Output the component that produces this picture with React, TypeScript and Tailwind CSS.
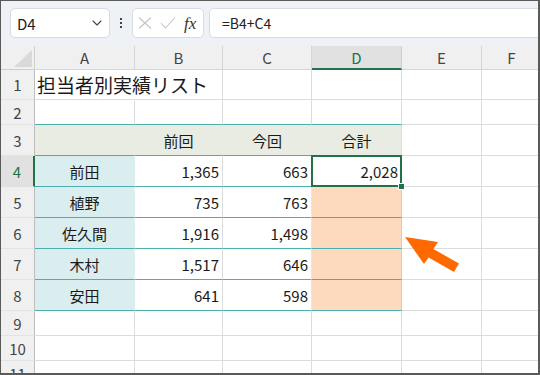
import React from "react";
import { ChevronDown } from "lucide-react";

type Cell = {
  text?: string;
  align?: "left" | "center" | "right";
  bg: string;
  br: string;
  bb: string;
  big?: boolean;
  sel?: boolean;
};

const colW = ["w-[100px]", "w-[88px]", "w-[89px]", "w-[90px]", "w-[80px]", "w-[60px]"];
const letters = ["A", "B", "C", "D", "E", "F"];

const G = "border-r-[#dcdcdc]";
const GB = "border-b-[#dcdcdc]";
const TB = "border-b-[#4aafae]";

function plain(): Cell {
  return { bg: "bg-white", br: G, bb: GB };
}

const names = ["前田", "植野", "佐久間", "木村", "安田"];
const prev = ["1,365", "735", "1,916", "1,517", "641"];
const cur = ["663", "763", "1,498", "646", "598"];

type Row = { n: number; h: string; cells: Cell[] };

const rows: Row[] = [];

rows.push({
  n: 1,
  h: "h-[30px]",
  cells: [
    { text: "担当者別実績リスト", align: "left", bg: "bg-white", br: "border-r-white", bb: GB, big: true },
    plain(),
    plain(),
    plain(),
    plain(),
    plain(),
  ],
});
rows.push({
  n: 2,
  h: "h-[25px]",
  cells: [
    { bg: "bg-white", br: G, bb: TB },
    { bg: "bg-white", br: G, bb: TB },
    { bg: "bg-white", br: G, bb: TB },
    { bg: "bg-white", br: G, bb: TB },
    plain(),
    plain(),
  ],
});
rows.push({
  n: 3,
  h: "h-[31px]",
  cells: [
    { bg: "bg-[#e8ece2]", br: "border-r-[#e8ece2]", bb: TB },
    { text: "前回", align: "center", bg: "bg-[#e8ece2]", br: "border-r-[#e8ece2]", bb: TB },
    { text: "今回", align: "center", bg: "bg-[#e8ece2]", br: "border-r-[#e8ece2]", bb: TB },
    { text: "合計", align: "center", bg: "bg-[#e8ece2]", br: G, bb: TB },
    plain(),
    plain(),
  ],
});
for (let i = 0; i < 5; i++) {
  rows.push({
    n: 4 + i,
    h: "h-[31px]",
    cells: [
      { text: names[i], align: "center", bg: "bg-[#daeef0]", br: "border-r-[#daeef0]", bb: TB },
      { text: prev[i], align: "right", bg: "bg-white", br: G, bb: TB },
      { text: cur[i], align: "right", bg: "bg-white", br: i === 0 ? G : "border-r-[#f3e3d6]", bb: TB },
      i === 0
        ? { text: "2,028", align: "right", bg: "bg-white", br: G, bb: TB, sel: true }
        : { bg: "bg-[#fdd9bd]", br: "border-r-[#e9c6ac]", bb: TB },
      plain(),
      plain(),
    ],
  });
}
for (const n of [9, 10, 11]) {
  rows.push({ n, h: "h-[25px]", cells: [plain(), plain(), plain(), plain(), plain(), plain()] });
}

function alignClass(a?: string) {
  if (a === "center") return "justify-center";
  if (a === "right") return "justify-end pr-[3px]";
  return "justify-start pl-[2px]";
}

export default function App() {
  return (
    <div className="relative w-[540px] h-[375px] overflow-hidden bg-white border-l border-t border-r-2 border-b-2 border-[#5a5a5a] font-['Noto_Sans_CJK_JP',sans-serif] text-[#1a1a1a]">
      {/* toolbar */}
      <div className="h-[45px] bg-[#eef1f5] flex items-start pt-[7px] pl-[9px] overflow-hidden">
        <div className="w-[100px] h-[30px] shrink-0 bg-white border border-[#d8dbe0] rounded-[5px] flex items-center justify-between pl-[6px] pr-[4px]">
          <span className="text-[15px] leading-none text-[#222]">D4</span>
          <ChevronDown size={16} strokeWidth={1.6} color="#444" />
        </div>
        <div className="w-[22px] h-[30px] shrink-0 flex flex-col items-center justify-center gap-[2px]">
          <span className="block w-[2px] h-[2px] bg-[#444]" />
          <span className="block w-[2px] h-[2px] bg-[#444]" />
          <span className="block w-[2px] h-[2px] bg-[#444]" />
        </div>
        <div className="w-[72px] h-[30px] shrink-0 bg-white border border-[#d8dbe0] rounded-[5px] flex items-center pl-[5px]">
          <svg width="14" height="12" viewBox="0 0 14 12" className="shrink-0">
            <path d="M1 0.5 L13 11.5 M13 0.5 L1 11.5" stroke="#c4c4c4" strokeWidth="1.1" fill="none" />
          </svg>
          <svg width="16" height="12" viewBox="0 0 16 12" className="shrink-0 ml-[8px]">
            <path d="M1 6 L5.5 11 L15 0.5" stroke="#c4c4c4" strokeWidth="1.1" fill="none" />
          </svg>
          <span className="ml-[8px] text-[17px] leading-none italic font-['Liberation_Serif',serif] text-[#333]">fx</span>
        </div>
        <div className="w-[340px] h-[30px] shrink-0 ml-[5px] bg-white border border-[#d8dbe0] rounded-l-[5px] flex items-center pl-[12px]">
          <span className="text-[14px] leading-none text-[#222]">=B4+C4</span>
        </div>
      </div>

      {/* column headers */}
      <div className="flex h-[24px]">
        <div className="relative w-[34px] shrink-0 bg-[#f0f0f0] border-r border-b border-[#cfcfcf]">
          <svg width="34" height="24" viewBox="0 0 34 24" className="absolute left-0 top-0">
            <polygon points="13,21 31,4 31,21" fill="#d9d9d9" />
          </svg>
        </div>
        {letters.map((l, i) =>
          i === 3 ? (
            <div
              key={l}
              className={`${colW[i]} shrink-0 flex items-center justify-center bg-[#e1e1e1] border-r border-r-[#cfcfcf] border-b-2 border-b-[#21714a] text-[15px] leading-none text-[#21714a]`}
            >
              {l}
            </div>
          ) : (
            <div
              key={l}
              className={`${colW[i]} shrink-0 flex items-center justify-center bg-[#f0f0f0] border-r border-b border-[#d6d6d6] text-[15px] leading-none text-[#444]`}
            >
              {l}
            </div>
          )
        )}
      </div>

      {/* rows */}
      {rows.map((r) => (
        <div key={r.n} className={`flex ${r.h}`}>
          {r.n === 4 ? (
            <div className="w-[34px] shrink-0 flex items-center justify-center bg-[#e1e1e1] border-r-2 border-r-[#21714a] border-b border-b-[#e0e0e0] text-[15px] leading-none text-[#21714a]">
              {r.n}
            </div>
          ) : (
            <div className="w-[34px] shrink-0 flex items-center justify-center bg-[#f0f0f0] border-r border-r-[#bdbdbd] border-b border-b-[#e3e3e3] text-[15px] leading-none text-[#444]">
              {r.n}
            </div>
          )}
          {r.cells.map((c, i) => (
            <div
              key={i}
              className={`${colW[i]} shrink-0 relative flex items-center ${alignClass(c.align)} ${c.bg} border-r border-b ${c.br} ${c.bb} whitespace-nowrap ${
                c.big ? "text-[19px] overflow-visible z-10" : "text-[15px]"
              } leading-none text-[#1a1a1a]`}
            >
              {c.text && <span className="relative z-10">{c.text}</span>}
              {c.sel && (
                <>
                  <div className="absolute left-[-1px] top-[-1px] right-[-1px] bottom-[-1px] border-2 border-[#21714a] pointer-events-none" />
                  <div className="absolute right-[-4px] bottom-[-4px] w-[7px] h-[7px] bg-[#21714a] border border-white z-20" />
                </>
              )}
            </div>
          ))}
        </div>
      ))}

      {/* arrow */}
      <svg width="540" height="375" viewBox="0 0 540 375" className="absolute left-0 top-0 pointer-events-none">
        <polygon
          points="404,236 437,241 432.4,248 458,262.5 453,271 427.6,256.5 423,263"
          fill="#ff6a00"
        />
      </svg>
    </div>
  );
}
